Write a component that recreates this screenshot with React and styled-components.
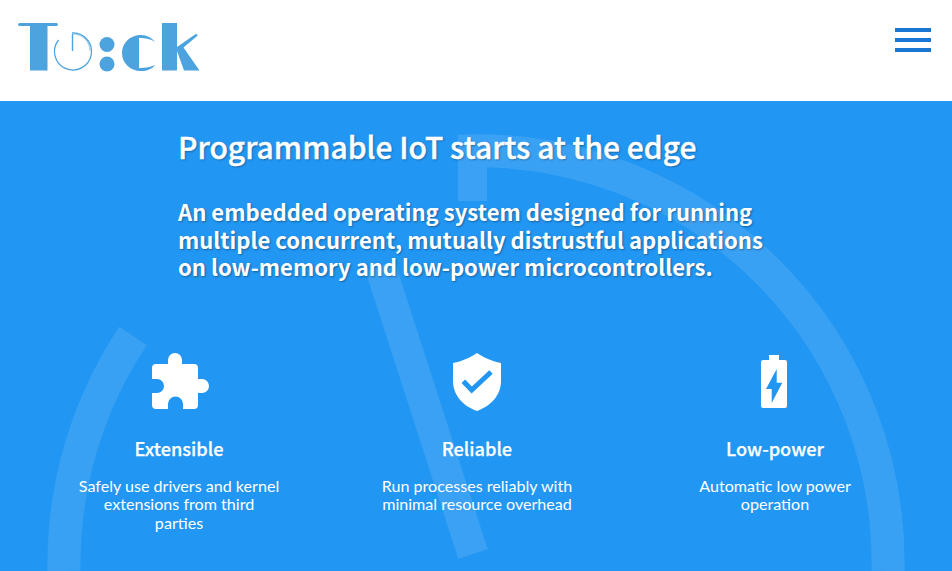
import React from "react";
import styled, { createGlobalStyle } from "styled-components";

const features = [
  { id: "ext", title: "Extensible", text: "Safely use drivers and kernel extensions from third parties", icon: "puzzle" },
  { id: "rel", title: "Reliable", text: "Run processes reliably with minimal resource overhead", icon: "shield" },
  { id: "low", title: "Low-power", text: "Automatic low power operation", icon: "battery" },
];

const Global = createGlobalStyle`
  html, body { margin: 0; padding: 0; height: 100%; overflow: hidden; }
  body { font-family: "Lato", sans-serif; background: #2196f3; }
`;

const Logo = () => (
  <svg width="210" height="90" viewBox="0 0 210 90" role="img" aria-label="Tock">
    <g fill="#4da3de">
      <path d="M18 24.500 Q18 23 20 23 H56.500 Q58 23 58 24.500 Q58 26 56 26 H47.500 V70.500 H30 V26 H20 Q18 26 18 24.500 Z" />
      <circle cx="107" cy="44.500" r="7.500" />
      <circle cx="107" cy="64" r="7.500" />
      <path d="M141 35 C147 35 152 38 155 42 C151 39 146 38 139 38 V68 C146 68 151 67 155 65 C152 69 147 71 141 71 C130 71 122 63 122 53 C122 43 130 35 141 35 Z" />
      <path d="M162 23 H177 V47 L195 34.500 Q197 33.500 197.500 35 Q197.500 36 196 37 L183.500 47.500 L199.500 70.500 H184 L177 51 V70.500 H162 Z" />
    </g>
    <g fill="none" stroke="#4da3de">
      <path d="M72 33 A18.500 18.500 0 1 1 58.500 40" strokeWidth="1.300" />
      <path d="M73 34 A17 17 0 0 1 90 51" strokeWidth="1" opacity=".6" />
      <path d="M72.500 34 V51" strokeWidth="1.400" />
    </g>
  </svg>
);

const Icon = ({ name }) => {
  if (name === "puzzle") {
    return (
      <svg width="60" height="60" viewBox="0 0 60 60">
        <path
          fill="#fff"
          d="M3 17 Q3 13 7 13 H19 V9 A7 7 0 0 1 33 9 V13 H45 Q49 13 49 17 V28 H53 A7 7 0 0 1 53 42 H49 V54 Q49 58 45 58 H34 V53 A7.500 7.500 0 0 0 19 53 V58 H7 Q3 58 3 54 V42 H8 A7 7 0 0 0 8 28 H3 Z"
        />
      </svg>
    );
  }
  if (name === "shield") {
    return (
      <svg width="60" height="60" viewBox="0 0 60 60">
        <path
          fill="#fff"
          d="M30 2 C36 6 44 10 54 12 V30 C54 44 44 55 30 60 C16 55 6 44 6 30 V12 C16 10 24 6 30 2 Z"
        />
        <path fill="none" stroke="#2196f3" strokeWidth="5" d="M16.300 30.300 L24.700 39 L44 21" />
      </svg>
    );
  }
  return (
    <svg width="60" height="60" viewBox="0 0 60 60">
      <path
        fill="#fff"
        d="M24 4 H34 V9 H40 Q42 9 42 11 V55 Q42 57 40 57 H18 Q16 57 16 55 V11 Q16 9 18 9 H24 Z"
      />
      <path fill="#2196f3" d="M31.700 18 L21 38 H26.700 V52 L37.300 31.700 H31.700 Z" />
    </svg>
  );
};

const App = () => {
  return (
    <Page>
      <Global />
      <Header>
        <LogoLink>
          <Logo />
        </LogoLink>
        <Burger aria-label="Menu">
          <span />
          <span />
          <span />
        </Burger>
      </Header>
      <Hero>
        <Watermark viewBox="0 0 952 470" aria-hidden="true">
          <g fill="none" stroke="#fff" strokeWidth="33" opacity=".11">
            <path d="M64 470 A412 412 0 0 1 133 235" />
            <path d="M458 50 H460 A412 412 0 0 1 888 470" />
            <path d="M472.500 34 V100" strokeWidth="29" />
            <path d="M380 165 L473 453" strokeWidth="31" />
          </g>
        </Watermark>
        <Intro>
          <Title>Programmable IoT starts at the edge</Title>
          <Subtitle>
            An embedded operating system designed for running multiple concurrent,
            mutually distrustful applications on low-memory and low-power
            microcontrollers.
          </Subtitle>
        </Intro>
        <Features>
          {features.map((feature) => {
            return (
              <Feature key={feature.id}>
                <IconSlot>
                  <Icon name={feature.icon} />
                </IconSlot>
                <FeatureTitle>{feature.title}</FeatureTitle>
                <FeatureText>{feature.text}</FeatureText>
              </Feature>
            );
          })}
        </Features>
      </Hero>
    </Page>
  );
};

const Page = styled.div`
  height: 571px;
  display: flex;
  flex-direction: column;
  overflow: hidden;
`;

const Header = styled.header`
  height: 101px;
  flex: none;
  background: #fff;
  display: flex;
  align-items: flex-start;
  justify-content: space-between;
  padding-right: 21px;
  box-sizing: border-box;
`;

const LogoLink = styled.a`
  display: block;
`;

const Burger = styled.button`
  display: flex;
  flex-direction: column;
  gap: 6px;
  width: 36px;
  margin-top: 28px;
  padding: 0;
  border: none;
  background: transparent;

  span {
    display: block;
    height: 4px;
    background: #1976d2;
  }
`;

const Hero = styled.main`
  position: relative;
  flex: 1;
  background: #2196f3;
  overflow: hidden;
`;

const Watermark = styled.svg`
  position: absolute;
  left: 0;
  top: 0;
  width: 952px;
  height: 470px;
`;

const Intro = styled.div`
  position: relative;
  width: 600px;
  margin-left: 178px;
  padding-top: 25px;
  color: #fff;
  text-shadow: 1px 1px 2px rgba(0, 0, 0, 0.35);
`;

const Title = styled.h1`
  margin: 0;
  font: 500 30px/40px "Noto Sans CJK SC", "Noto Sans", sans-serif;
  -webkit-text-stroke: 0.4px #fff;
`;

const Subtitle = styled.p`
  margin: 32px 0 0;
  font: 700 22.080px/27.500px "Noto Sans CJK SC", "Noto Sans", sans-serif;
`;

const Features = styled.div`
  position: relative;
  display: grid;
  grid-template-columns: repeat(3, 298px);
  justify-content: center;
  margin-top: 70px;
  margin-left: 2px;
`;

const Feature = styled.section`
  display: flex;
  flex-direction: column;
  align-items: center;
  color: #fff;
  text-align: center;
`;

const IconSlot = styled.div`
  height: 60px;
`;

const FeatureTitle = styled.h2`
  margin: 24px 0 0;
  font: 500 18.200px/26px "Noto Sans CJK SC", "Noto Sans", sans-serif;
  -webkit-text-stroke: 0.25px #fff;
`;

const FeatureText = styled.p`
  width: 201px;
  margin: 16px 0 0;
  font: 400 16.100px/18.600px "Lato", sans-serif;
`;

export default App;
